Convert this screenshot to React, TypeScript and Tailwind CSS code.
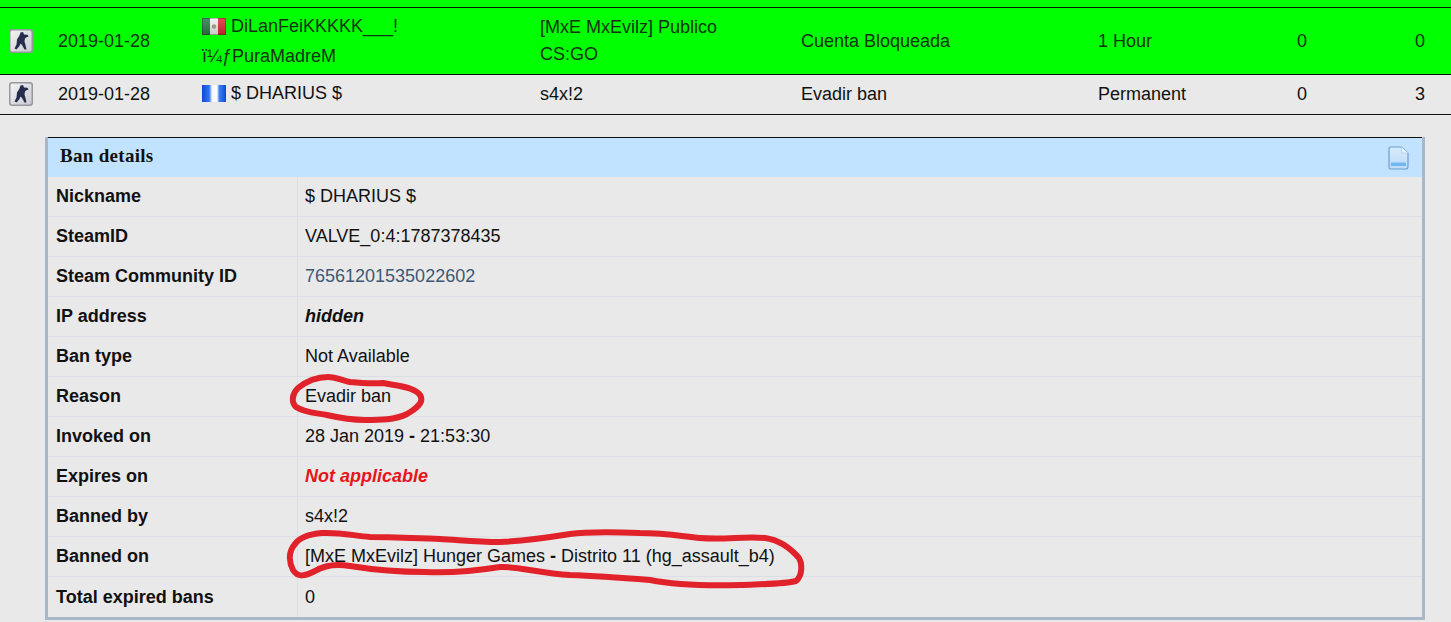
const FONT = "font-['Liberation_Sans',Arial,sans-serif]";

function CsIcon({ id }: { id: string }) {
  return (
    <svg width="24" height="24" viewBox="0 0 24 24" className="block">
      <defs>
        <linearGradient id={id} x1="0" y1="0" x2="1" y2="1">
          <stop offset="0" stopColor="#f4f4f6" />
          <stop offset="1" stopColor="#c8cad0" />
        </linearGradient>
      </defs>
      <rect x="0.75" y="0.75" width="22.5" height="22.5" rx="2.5" fill={`url(#${id})`} stroke="#96989c" strokeWidth="1.5" />
      <path
        d="M11.5 3.5 L14 3 L15 5.5 L18.5 5.8 L19.5 7.5 L17 8.5 L16 9.5 L15.5 12.5 L16.5 16 L17.5 20.5 L15.5 20.5 L13 16 L11.5 14.5 L10.5 17 L7.5 20.5 L5.5 19.5 L7.5 15.5 L8 10.5 L10.5 6.5 Z"
        fill="#262c4c"
      />
    </svg>
  );
}

function MexicoFlag() {
  return (
    <svg width="24" height="17" viewBox="0 0 24 17" className="block">
      <defs>
        <linearGradient id="mxs" x1="0" y1="0" x2="0" y2="1">
          <stop offset="0" stopColor="#ffffff" stopOpacity="0.15" />
          <stop offset="1" stopColor="#000000" stopOpacity="0.18" />
        </linearGradient>
      </defs>
      <rect width="8" height="17" fill="#2f7a4c" />
      <rect x="8" width="8" height="17" fill="#f2f2f2" />
      <rect x="16" width="8" height="17" fill="#e02a33" />
      <circle cx="12" cy="8.5" r="2.2" fill="#a89a7c" />
      <rect width="24" height="17" fill="url(#mxs)" />
      <rect x="0.5" y="0.5" width="23" height="16" fill="none" stroke="#000" strokeOpacity="0.25" />
    </svg>
  );
}

function FranceFlag() {
  return (
    <svg width="24" height="17" viewBox="0 0 24 17" className="block">
      <defs>
        <linearGradient id="frl" x1="0" y1="0" x2="1" y2="0">
          <stop offset="0" stopColor="#1048d8" />
          <stop offset="0.3" stopColor="#2f74f0" />
          <stop offset="0.42" stopColor="#f2f6ff" />
          <stop offset="0.62" stopColor="#ffffff" />
          <stop offset="0.72" stopColor="#3c80f2" />
          <stop offset="1" stopColor="#0f48d4" />
        </linearGradient>
      </defs>
      <rect width="24" height="17" fill="url(#frl)" />
    </svg>
  );
}

function DocIcon() {
  return (
    <svg width="21" height="24" viewBox="0 0 21 24" className="block">
      <defs>
        <linearGradient id="doc" x1="0" y1="0" x2="0" y2="1">
          <stop offset="0" stopColor="#d8eafb" />
          <stop offset="1" stopColor="#bcdcf8" />
        </linearGradient>
      </defs>
      <path d="M2.5 1 H13.5 L20 7 V20.5 Q20 23 17.5 23 H2.5 Q1 23 1 21 V2.5 Q1 1 2.5 1 Z" fill="url(#doc)" stroke="#6b9fd0" strokeWidth="1.2" />
      <path d="M13.5 1 V7 H20" fill="#e8f3fd" stroke="#b0cfe9" strokeWidth="0.8" />
      <rect x="3" y="16.5" width="15" height="3.5" fill="#70b8f2" />
    </svg>
  );
}

const details: { label: string; value: React.ReactNode }[] = [
  { label: "Nickname", value: "$ DHARIUS $" },
  { label: "SteamID", value: "VALVE_0:4:1787378435" },
  { label: "Steam Community ID", value: <span className="text-[#3d5874]">76561201535022602</span> },
  { label: "IP address", value: <span className="font-bold italic">hidden</span> },
  { label: "Ban type", value: "Not Available" },
  { label: "Reason", value: "Evadir ban" },
  { label: "Invoked on", value: <>28 Jan 2019 <b>-</b> 21:53:30</> },
  { label: "Expires on", value: <span className="font-bold italic text-[#e8141c]">Not applicable</span> },
  { label: "Banned by", value: "s4x!2" },
  { label: "Banned on", value: <>[MxE MxEvilz] Hunger Games <b>-</b> Distrito 11 (hg_assault_b4)</> },
  { label: "Total expired bans", value: "0" },
];

function Cells({ id, date, name, server, reason, length, a, b }: { id: string; date: string; name: React.ReactNode; server: React.ReactNode; reason: string; length: string; a: string; b: string }) {
  return (
    <>
      <div className="mb-[1px] w-[58px] shrink-0 pl-[9px]"><CsIcon id={id} /></div>
      <div className="w-[144px] shrink-0">{date}</div>
      <div className="w-[338px] shrink-0 leading-[27px]">{name}</div>
      <div className="w-[261px] shrink-0 leading-[27px]">{server}</div>
      <div className="w-[297px] shrink-0">{reason}</div>
      <div className="w-[190px] shrink-0">{length}</div>
      <div className="w-[28px] shrink-0 text-center">{a}</div>
      <div className="w-[118px] shrink-0 pl-[90px] text-center">{b}</div>
    </>
  );
}

export default function App() {
  return (
    <div className={`relative h-[622px] w-[1451px] overflow-hidden bg-[#e9e9e9] text-[18px] text-[#111] ${FONT}`}>
      <div className="h-[7px] bg-[#00ff00]" />
      <div className="flex h-[68px] items-center border-y border-[#111] bg-[#00ff00] text-[#113311]">
        <Cells
          id="cs1"
          date="2019-01-28"
          name={<><span className="inline-flex items-center gap-[5px]"><MexicoFlag />DiLanFeiKKKKK___!</span><br />ï¼ƒPuraMadreM</>}
          server={<>[MxE MxEvilz] Publico<br />CS:GO</>}
          reason="Cuenta Bloqueada"
          length="1 Hour"
          a="0"
          b="0"
        />
      </div>
      <div className="flex h-[40px] items-center border-b border-[#111]">
        <Cells
          id="cs2"
          date="2019-01-28"
          name={<span className="inline-flex items-center gap-[5px]"><FranceFlag />$ DHARIUS $</span>}
          server="s4x!2"
          reason="Evadir ban"
          length="Permanent"
          a="0"
          b="3"
        />
      </div>
      <div className="ml-[45px] mt-[22px] w-[1380px] border-x-[3px] border-b-[3px] border-x-[#a9b8c8] border-b-[#a9b8c8]">
        <div className="flex h-[40px] items-center justify-between border-t border-[#111] bg-[#c2e3ff] pl-[12px] pr-[13px]">
          <span className="pb-[2px] font-['Liberation_Serif',serif] text-[19px] font-bold tracking-[0.3px]">Ban details</span>
          <DocIcon />
        </div>
        {details.map((d, i) => (
          <div key={d.label} className={`flex h-[40px] items-center ${i < details.length - 1 ? "border-b border-[#dcdfe5]" : ""}`}>
            <div className="flex h-full w-[250px] shrink-0 items-center border-r border-[#dcdfe5] pl-[8px] font-bold">{d.label}</div>
            <div className="pl-[7px]">{d.value}</div>
          </div>
        ))}
      </div>
      <svg width="1451" height="622" viewBox="0 0 1451 622" className="pointer-events-none absolute left-0 top-0" fill="none" stroke="#e1222a" strokeWidth="6" strokeLinecap="round" strokeLinejoin="round">
        <path d="M383 383 C370 384 360 383 350 382 C342 380 335 377 328 377 C318 377 308 380 298 388 C292 394 291 402 296 407 C305 413 318 413 327 415 C340 418 350 420 365 420 C380 420 395 420 407 414 C417 408 423 403 421 397 C419 391 410 388 400 386 C394 385 388 384 383 383 Z" />
        <path d="M322 533 C310 534 300 537 295 544 C288 552 289 562 293 570 C298 578 305 576 315 571 C325 565 338 564 350 566 C375 570 400 572 425 572 C450 573 475 571 500 567 C515 566 540 573 570 575 C600 576 625 578 650 580 C670 584 700 586 740 585 C765 584 785 584 796 581 C803 575 802 563 799 558 C792 550 780 540 765 538 C745 536 725 540 700 538 C680 536 665 533 640 533 C610 532 585 532 570 534 C545 538 525 541 500 542 C475 542 460 540 440 539 C415 538 395 537 370 537 C355 536 340 532 322 533 Z" />
      </svg>
    </div>
  );
}
